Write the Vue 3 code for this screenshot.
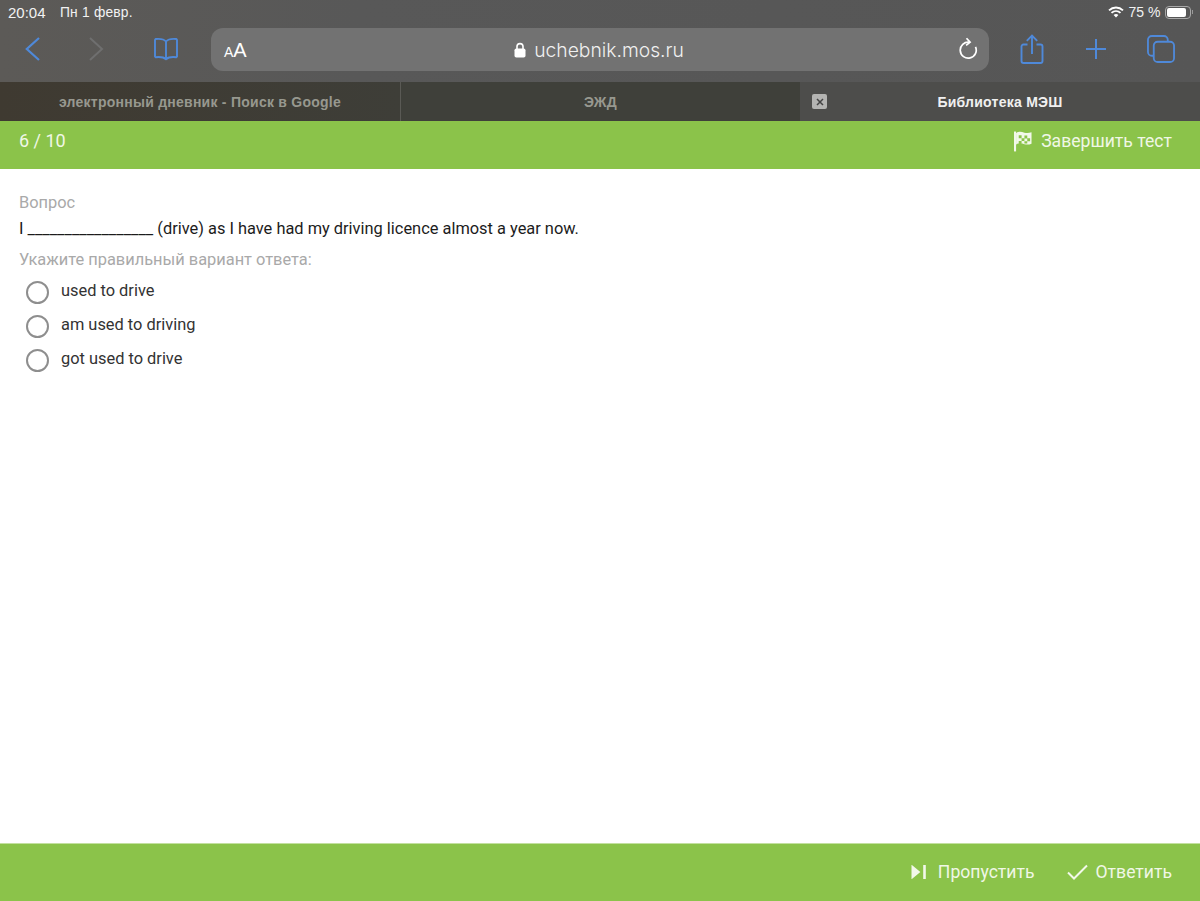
<script setup>
const tabs = [
  { id: 1, label: 'электронный дневник - Поиск в Google', active: false },
  { id: 2, label: 'ЭЖД', active: false },
  { id: 3, label: 'Библиотека МЭШ', active: true }
]
const options = ['used to drive', 'am used to driving', 'got used to drive']
</script>

<template>
  <div class="page">
    <header class="chrome">
      <div class="status">
        <span class="time">20:04</span>
        <span class="date">Пн 1 февр.</span>
        <span class="spacer"></span>
        <svg class="wifi" width="16" height="12" viewBox="0 0 16 12">
          <path d="M1 4.400C5 .6 11 .6 15 4.400" fill="none" stroke="#fff" stroke-width="1.900"/>
          <path d="M3.500 6.900c2.600-2.400 6.400-2.400 9 0" fill="none" stroke="#fff" stroke-width="1.900"/>
          <path d="M8 11.400 5.600 8.900c1.400-1.100 3.400-1.100 4.800 0z" fill="#fff"/>
        </svg>
        <span class="pct">75 %</span>
        <span class="battery"><span class="battery-fill"></span></span>
        <span class="battery-cap"></span>
      </div>
      <div class="toolbar">
        <div class="nav-left">
          <svg class="ic ic-back" width="16" height="26" viewBox="0 0 16 26"><path d="M14 2 1.800 13 14 24" fill="none" stroke="#4f89d9" stroke-width="2.200"/></svg>
          <svg class="ic ic-fwd" width="16" height="26" viewBox="0 0 16 26"><path d="M2 2l12 11L2 24" fill="none" stroke="#6f6f6f" stroke-width="2"/></svg>
          <svg class="ic ic-book" width="28" height="24" viewBox="0 0 28 24" fill="none" stroke="#4f89d9" stroke-width="1.900" stroke-linejoin="round">
            <path d="M14 4.500C12 2.200 8.500 1.500 3.600 2L3 3v16.500l.8.7c4.500-.5 8 0 10.200 2 2.200-2 5.700-2.500 10.200-2l.8-.7V3l-.6-1C19.500 1.500 16 2.200 14 4.500z"/>
            <path d="M14 4.500V22"/>
          </svg>
        </div>
        <div class="address">
          <span class="aa"><small>A</small>A</span>
          <span class="url">
            <svg width="12" height="16" viewBox="0 0 12 16"><path d="M3 7V4.600a3 3 0 0 1 6 0V7" fill="none" stroke="#fff" stroke-width="1.600"/><rect x=".5" y="6.500" width="11" height="9" rx="1.800" fill="#fff"/></svg>
            <span>uchebnik.mos.ru</span>
          </span>
          <svg class="reload" width="20" height="24" viewBox="0 0 20 24" fill="none" stroke="#fff" stroke-width="1.700">
            <path d="M11.200 5.200a8 8 0 1 0 6.300 4.600"/>
            <path d="M8.500 1.200l3.600 4-4 3.200"/>
          </svg>
        </div>
        <div class="nav-right">
          <svg width="24" height="30" viewBox="0 0 24 30" fill="none" stroke="#4f89d9" stroke-width="1.900">
            <path d="M7.500 10.500H3.500a2 2 0 0 0-2 2V27a2 2 0 0 0 2 2h17a2 2 0 0 0 2-2V12.500a2 2 0 0 0-2-2h-4"/>
            <path d="M12 20V2M6.800 6.800 12 1.600l5.200 5.200"/>
          </svg>
          <svg width="22" height="22" viewBox="0 0 22 22" fill="none" stroke="#4f89d9" stroke-width="2"><path d="M11 1v20M1 11h20"/></svg>
          <svg width="28" height="28" viewBox="0 0 29 29" fill="none" stroke="#4f89d9" stroke-width="1.900">
            <rect x="7" y="7" width="21" height="21" rx="4"/>
            <path d="M7 21.500H5a4 4 0 0 1-4-4V5a4 4 0 0 1 4-4h12.500a4 4 0 0 1 4 4v2"/>
          </svg>
        </div>
      </div>
      <nav class="tabs">
        <div v-for="tab in tabs" :key="tab.id" class="tab" :class="{ active: tab.active }">
          <span v-if="tab.active" class="close">
            <svg width="8" height="8" viewBox="0 0 8 8"><path d="M1 1l6 6M7 1 1 7" stroke="#444" stroke-width="1.500"/></svg>
          </span>
          <span class="tab-label">{{ tab.label }}</span>
        </div>
      </nav>
    </header>

    <section class="bar top-bar">
      <span>6 / 10</span>
      <span class="action">
        <svg width="18" height="22" viewBox="0 0 19 22">
          <path d="M0 1h2.200v21H0z" fill="#f2f8ea"/>
          <path fill-rule="evenodd" d="M2.200 2.500C6 .5 8 1.500 11 2.200c2.500.6 4.500.6 7.500-.4v12c-3 1.200-5 1.100-7.500.5-3-.8-5-1.500-8.800.4zM5 5v3h3V5zm6 .3v3h3v-3zM8 8v3h3V8zm6 .2v3h3v-3zM5 11v2.500h3V11zm6 .2v2.500h3v-2.500z" fill="#f2f8ea"/>
        </svg>
        <span>Завершить тест</span>
      </span>
    </section>

    <main class="content">
      <div class="muted label">Вопрос</div>
      <div class="question">I _________________ (drive) as I have had my driving licence almost a year now.</div>
      <div class="muted prompt">Укажите правильный вариант ответа:</div>
      <ul class="options">
        <li v-for="o in options" :key="o" class="option">
          <span class="radio"></span>
          <span class="option-text">{{ o }}</span>
        </li>
      </ul>
    </main>

    <footer class="bar bottom-bar">
      <span class="action skip">
        <svg width="15" height="14" viewBox="0 0 15 14"><path d="M1.500 1.800 7.800 7l-6.300 5.200z" fill="#f2f8ea" stroke="#f2f8ea" stroke-width="2"/><path d="M13.500 0v14" stroke="#f2f8ea" stroke-width="2.600"/></svg>
        <span>Пропустить</span>
      </span>
      <span class="action answer">
        <svg width="21" height="16" viewBox="0 0 21 16"><path d="M1 8.500l6 6L20 1.500" fill="none" stroke="#f2f8ea" stroke-width="2"/></svg>
        <span>Ответить</span>
      </span>
    </footer>
  </div>
</template>

<style scoped>
.page {
  width: 1200px;
  height: 901px;
  display: flex;
  flex-direction: column;
  background: #fff;
  overflow: hidden;
  font-family: Roboto, "Liberation Sans", sans-serif;
}
.chrome {
  height: 121px;
  flex: none;
  display: flex;
  flex-direction: column;
  background: linear-gradient(90deg, #5c5a57 0%, #585858 30%, #565656 100%);
  font-family: "Liberation Sans", Arial, sans-serif;
  color: #f2f2f2;
}
.status {
  height: 24px;
  display: flex;
  align-items: center;
  padding: 0 7px 0 8px;
  font-size: 14px;
  flex: none;
}
.time { width: 52px; font-size: 15px; }
.date { font-size: 13.800px; letter-spacing: .2px; }
.spacer { flex: 1; }
.wifi { margin-right: 5px; }
.pct { font-size: 14px; margin-right: 4px; }
.battery {
  width: 26px;
  height: 13px;
  box-sizing: border-box;
  border: 1px solid #a8a8a8;
  border-radius: 4px;
  padding: 1px;
  display: flex;
}
.battery-fill { width: 19px; background: #fff; border-radius: 2px; }
.battery-cap { width: 1.500px; height: 4px; background: #999; margin-left: 1px; }
.toolbar {
  height: 58px;
  flex: none;
  display: flex;
  align-items: flex-start;
}
.nav-left {
  width: 211px;
  flex: none;
  height: 50px;
  display: flex;
  align-items: center;
  padding-left: 25px;
  box-sizing: border-box;
}
.ic-fwd { margin-left: 47px; }
.ic-book { margin-left: 48px; }
.address {
  width: 778px;
  height: 43px;
  margin-top: 4px;
  flex: none;
  background: #727272;
  border-radius: 12px;
  display: grid;
  grid-template-columns: 1fr auto 1fr;
  align-items: center;
  padding: 0 11px 0 13px;
  box-sizing: border-box;
  color: #fff;
}
.aa { font-size: 20px; line-height: 1; font-family: "Liberation Sans", Arial, sans-serif; }
.aa small { font-size: 14px; }
.url {
  display: flex;
  align-items: center;
  gap: 8px;
  margin-right: 4px;
  font-size: 19.300px;
  color: #f0f0f0;
  font-family: Inter, "Liberation Sans", sans-serif;
  font-weight: 300;
}
.reload { justify-self: end; margin-top: -2px; }
.nav-right {
  flex: 1;
  height: 50px;
  display: flex;
  align-items: center;
  padding-left: 31px;
  gap: 40.500px;
}
.tabs {
  height: 39px;
  flex: none;
  display: grid;
  grid-template-columns: repeat(3, 1fr);
  font-size: 14px;
  font-weight: 700;
}
.tab {
  min-width: 0;
  display: flex;
  align-items: center;
  justify-content: center;
  background: #3f403a;
  color: #97988f;
  border-left: 1px solid #5a5a55;
  box-sizing: border-box;
  letter-spacing: .25px;
  white-space: nowrap;
}
.tab:first-child {
  border-left: 0;
  background: linear-gradient(90deg, #3f3a31, #3e3e38);
}
.tab.active {
  display: grid;
  grid-template-columns: 1fr auto 1fr;
  align-items: center;
  background: #4d4d4b;
  color: #f0f0f0;
  border-left: 0;
  padding: 0 12px;
}
.close {
  width: 15px;
  height: 15px;
  background: #b4b4b2;
  border-radius: 2px;
  display: flex;
  align-items: center;
  justify-content: center;
}
.bar {
  flex: none;
  background: #8bc34a;
  color: #f0f7e6;
  display: flex;
  align-items: center;
  font-size: 17.600px;
}
.top-bar {
  height: 48px;
  box-sizing: border-box;
  justify-content: space-between;
  padding: 0 28px 9px 19px;
}
.top-bar > span:first-child { font-size: 18px; }
.action {
  display: flex;
  align-items: center;
}
.top-bar .action { gap: 9px; }
.content {
  flex: 1;
  padding: 24px 19px 0;
  font-size: 16.400px;
}
.muted { color: #a9a9a9; }
.label { line-height: 19px; }
.question {
  color: #1c1c1c;
  line-height: 19px;
  margin-top: 7px;
}
.prompt { line-height: 19px; margin-top: 12px; }
.options {
  list-style: none;
  margin: 11px 0 0;
  padding: 0 0 0 7px;
}
.option {
  height: 34px;
  display: flex;
  align-items: flex-start;
  color: #333;
}
.radio {
  width: 23px;
  height: 23px;
  box-sizing: border-box;
  border: 2px solid #8e8e8e;
  border-radius: 50%;
  flex: none;
  margin-top: 1px;
}
.option-text { margin-left: 12px; line-height: 21px; }
.bottom-bar {
  height: 58px;
  justify-content: flex-end;
  padding: 0 28px 2px 0;
  border-top: 1px solid #c3e09f;
  box-sizing: border-box;
}
.skip { gap: 12px; margin-right: 32px; }
.answer { gap: 8px; }
</style>
